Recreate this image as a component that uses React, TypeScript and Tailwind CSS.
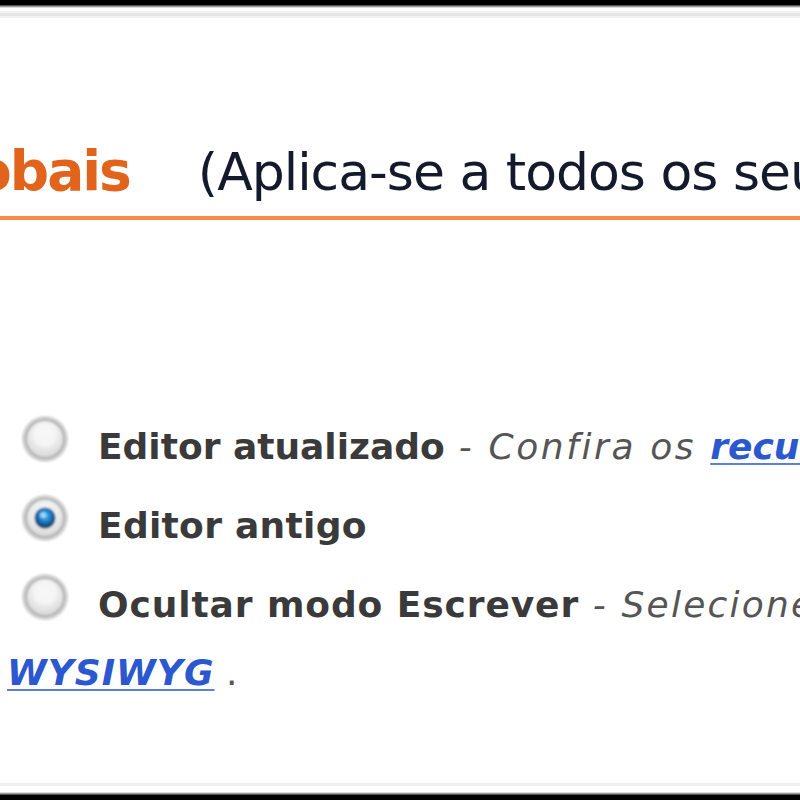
import React from "react";

function Radio({ checked }: { checked?: boolean }) {
  const gid = checked ? "rgC" : "rgU";
  return (
    <svg width="48" height="48" viewBox="0 0 48 48" className="shrink-0">
      <defs>
        <radialGradient id={gid} cx="50%" cy="35%" r="65%">
          <stop offset="0%" stopColor="#fbfbfb" />
          <stop offset="60%" stopColor="#ebebeb" />
          <stop offset="100%" stopColor="#d8d8d8" />
        </radialGradient>
        <radialGradient id="dot" cx="50%" cy="40%" r="60%">
          <stop offset="0%" stopColor="#5ec4f4" />
          <stop offset="45%" stopColor="#1f7fc6" />
          <stop offset="100%" stopColor="#0b2f5c" />
        </radialGradient>
        <filter id="blur1" x="-20%" y="-20%" width="140%" height="140%">
          <feGaussianBlur stdDeviation="0.9" />
        </filter>
      </defs>
      <g filter="url(#blur1)">
        <circle cx="24" cy="24" r="23" fill="#d2d2d2" />
        <circle cx="24" cy="24" r="20" fill="#b0b0b0" />
        <circle cx="24" cy="24" r="18" fill={`url(#${gid})`} />
        {checked ? (
          <>
            <circle cx="24" cy="24" r="10.5" fill="url(#dot)" />
            <circle cx="22" cy="21" r="3" fill="#a8e4ff" opacity="0.8" />
          </>
        ) : (
          <circle cx="24" cy="20" r="12" fill="#f6f6f6" opacity="0.7" />
        )}
      </g>
    </svg>
  );
}

const link =
  "italic font-bold text-[#2b57cf] underline decoration-[#5a7fe0] decoration-2 underline-offset-4";

export default function App() {
  return (
    <div
      className="w-[800px] h-[800px] overflow-hidden bg-white flex flex-col whitespace-nowrap"
      style={{ fontFamily: '"DejaVu Sans", Verdana, sans-serif' }}
    >
      {/* top frame */}
      <div className="h-[5px] bg-black shrink-0" />
      <div className="h-[1px] bg-[#555] shrink-0" />
      <div className="h-[1px] bg-[#999] shrink-0" />
      <div className="h-[1px] bg-[#dcdcdc] shrink-0" />
      <div className="h-[3px] bg-white shrink-0" />
      <div className="h-[2px] bg-[#f3f3f3] shrink-0" />
      <div className="h-[3px] bg-[#e6e6e6] shrink-0" />
      <div className="h-[2px] bg-[#f3f3f3] shrink-0" />

      {/* heading */}
      <div className="mt-[128px] h-[50px] flex items-baseline leading-[50px] shrink-0">
        <span className="font-bold text-[#e2641c] text-[55px] tracking-[-2px] ml-[-86px]">Globais</span>
        <span className="ml-[68px] text-[52px] tracking-[-1px] text-[#141a2c]">
          (Aplica-se a todos os seus blogs)
        </span>
      </div>
      <div className="mt-[20px] h-[4px] bg-[#f78a4c] shrink-0" />

      {/* options */}
      <div className="mt-[195px] flex flex-col text-[36px] leading-[48px] text-[#3a3a3a]">
        <div className="h-[79px] flex items-start pl-[21px]">
          <Radio />
          <div className="ml-[29px] mt-[8px]">
            <span className="font-bold">Editor atualizado</span>
            <span className="italic text-[#555] tracking-[2.6px]"> - Confira os </span>
            <span className={link}>recursos mais recentes</span>
          </div>
        </div>
        <div className="h-[79px] flex items-start pl-[21px]">
          <Radio checked />
          <div className="ml-[29px] mt-[8px]">
            <span className="font-bold tracking-[0.3px]">Editor antigo</span>
          </div>
        </div>
        <div className="h-[72px] flex items-start pl-[21px]">
          <Radio />
          <div className="ml-[29px] mt-[8px]">
            <span className="font-bold tracking-[0.9px]">Ocultar modo Escrever</span>
            <span className="italic text-[#555] tracking-[2.2px]"> - Selecione esta opção para ocultar o editor</span>
          </div>
        </div>
        <div className="pl-[7px] mt-[4px]">
          <span className={`${link} tracking-[1px]`}>WYSIWYG</span>
          <span className="text-[#555]"> .</span>
        </div>
      </div>

      <div className="flex-1" />
      {/* bottom frame */}
      <div className="h-[3px] bg-[#f0f0f0] shrink-0" />
      <div className="h-[6px] bg-white shrink-0" />
      <div className="h-[1px] bg-[#dcdcdc] shrink-0" />
      <div className="h-[1px] bg-[#999] shrink-0" />
      <div className="h-[1px] bg-[#555] shrink-0" />
      <div className="h-[5px] bg-black shrink-0" />
    </div>
  );
}
